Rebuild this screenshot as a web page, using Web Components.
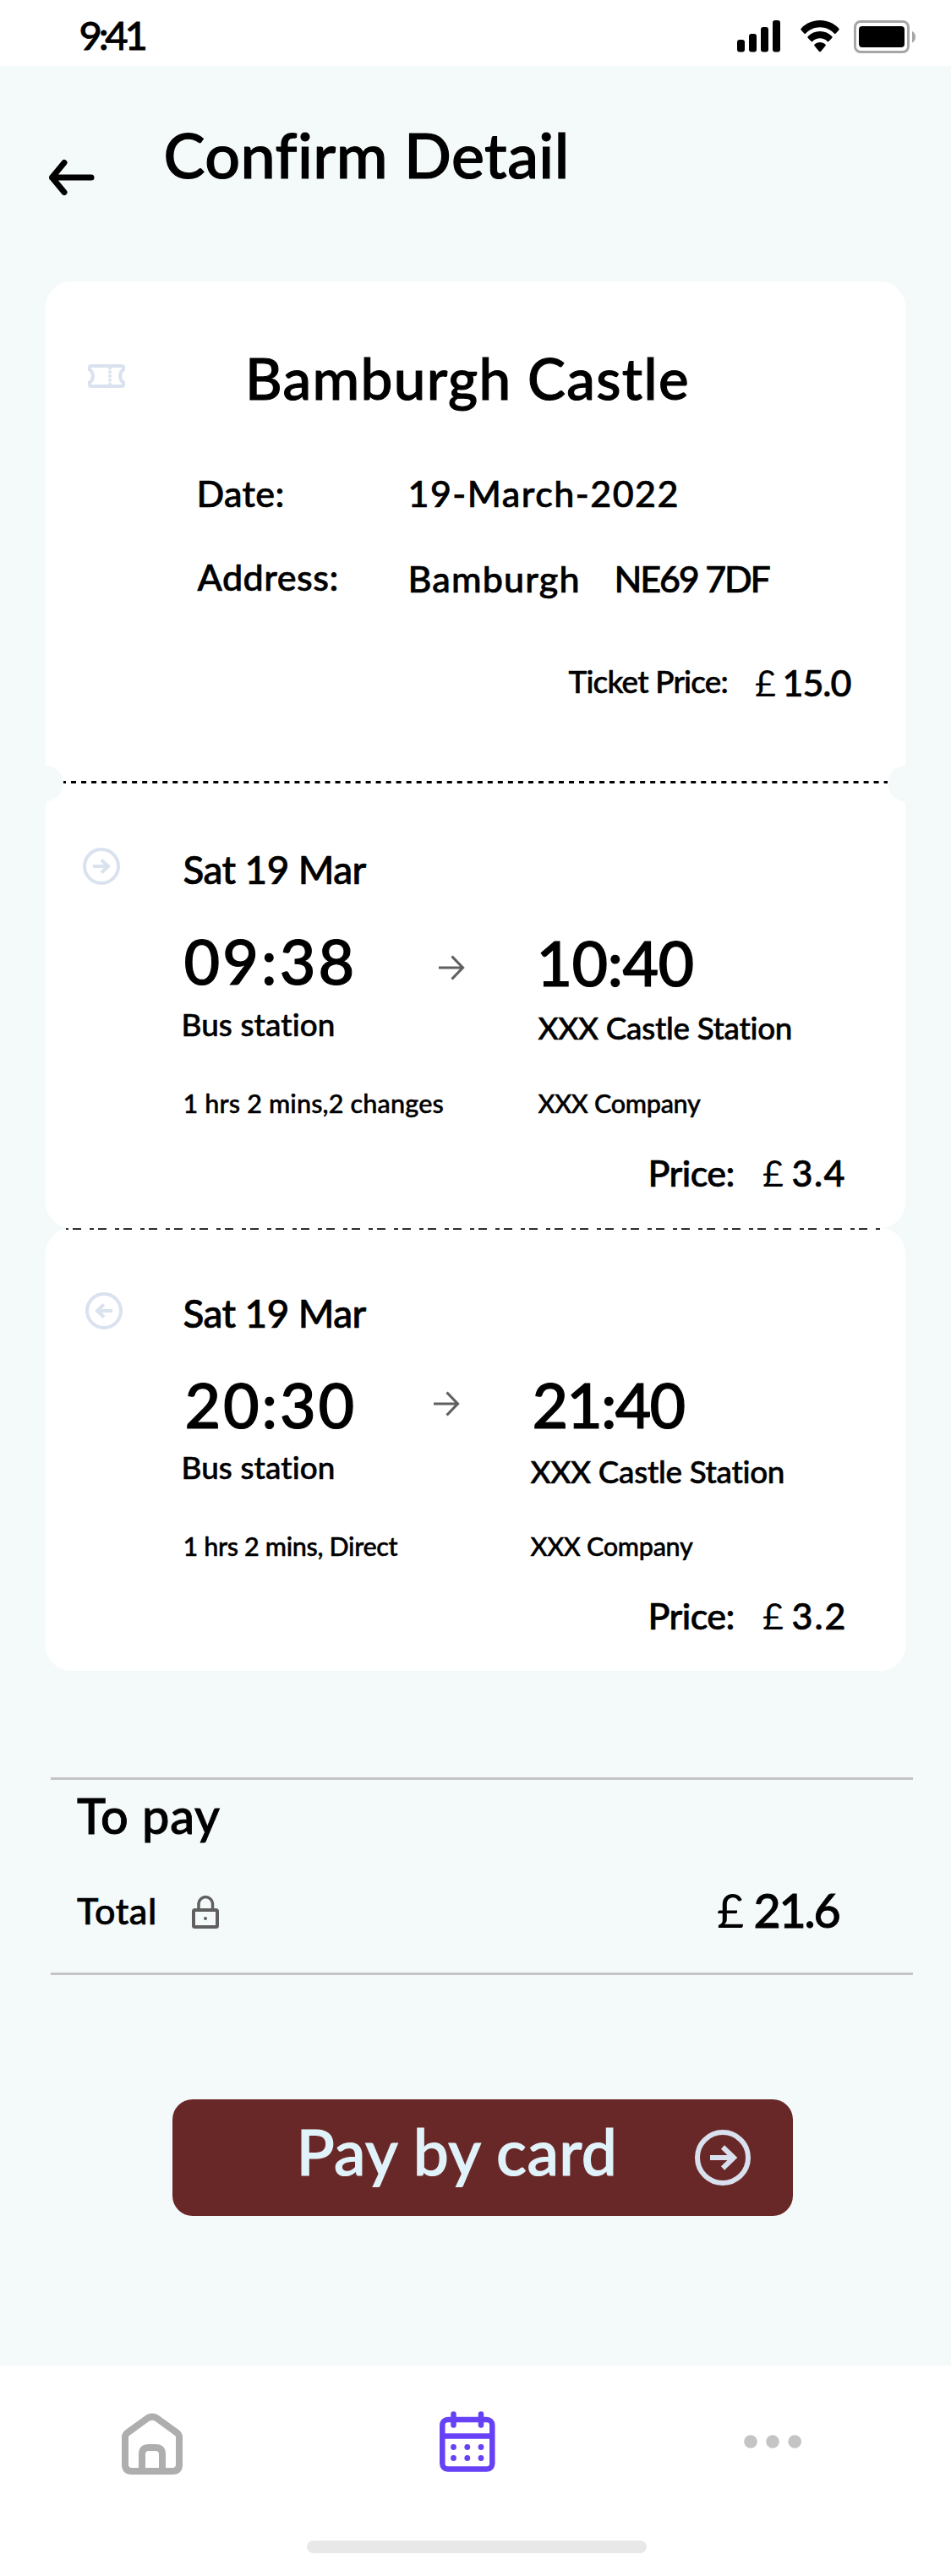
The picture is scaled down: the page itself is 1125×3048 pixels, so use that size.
<!DOCTYPE html>
<html lang="en">
<head>
<meta charset="utf-8">
<title>Confirm Detail</title>
<style>
body{margin:0;background:#f4fafa;font-family:Lato,"Liberation Sans",sans-serif;font-weight:500;color:#000}
</style>
</head>
<body>
<ticket-app></ticket-app>
<script>
const pen = document.createElement('canvas').getContext('2d');

function define(name, html, after) {
  const tpl = document.createElement('template');
  tpl.innerHTML = html;
  customElements.define(name, class extends HTMLElement {
    connectedCallback() {
      if (this.shadowRoot) return;
      this.attachShadow({mode: 'open'}).append(tpl.content.cloneNode(true));
      if (after) after(this, this.shadowRoot);
    }
  });
}

/* A line of text whose box is exactly its capital height (cap) by its ink width (w). */
define('fit-text', `<style>
:host{display:block;flex:none;white-space:pre}
span{display:block;width:0;padding-top:1px}
</style><span></span>`, (host, root) => {
  const text = host.getAttribute('text');
  const cap = +host.getAttribute('cap'), w = +host.getAttribute('w');
  const thin = host.hasAttribute('thin');
  const weight = thin ? 400 : 500;
  const size = cap / 0.72;
  pen.font = `${weight} ${size}px Lato, "Liberation Sans", sans-serif`;
  const m = pen.measureText(text);
  const ink = m.actualBoundingBoxRight + m.actualBoundingBoxLeft;
  const space = text.length > 1 ? (w - ink) / (text.length - 1) : 0;
  host.style.width = w + 'px';
  host.style.height = cap + 'px';
  const s = root.querySelector('span');
  s.textContent = text;
  s.style.cssText = `font-size:${size}px;font-weight:${weight};line-height:${2 * (cap - 0.387 * size)}px;letter-spacing:${space}px;font-variant-ligatures:none;margin-left:${m.actualBoundingBoxLeft - (thin ? 0 : 0.5)}px;-webkit-text-stroke:${thin ? 0 : 0.016 * size}px currentColor`;
});

const icons = {
  back: [54, 42, '<path d="M3.500 21H50M18 3.500L3.500 21L18 38.500" stroke-width="7" stroke-linecap="round" stroke-linejoin="round"/>'],
  ticket: [44, 28, '<path d="M4 2H40Q42 2 42 4V6.500C37 9 37 19 42 21.500V24Q42 26 40 26H4Q2 26 2 24V21.500C7 19 7 9 2 6.500V4Q2 2 4 2Z" stroke-width="4"/><g fill="currentColor" stroke="none"><circle cx="26" cy="4.500" r="2"/><circle cx="26" cy="9.300" r="2"/><circle cx="26" cy="14" r="2"/><circle cx="26" cy="18.700" r="2"/><circle cx="26" cy="23.500" r="2"/></g>'],
  out: [44, 44, '<circle cx="22" cy="22" r="20" stroke-width="4"/><path d="M12 22H30M22 14.500L30 22L22 29.500" stroke-width="4"/>'],
  home: [72, 72, '<path d="M4 27.500Q4 25 6.500 22.700L30.500 5.300Q36 2 41.500 5.300L65.500 22.700Q68 25 68 27.500V60Q68 68 60 68H12Q4 68 4 60Z" stroke-width="8"/><path d="M24 66V48Q24 40 32 40H40Q48 40 48 48V66" stroke-width="8"/>'],
  back2: [44, 44, '<circle cx="22" cy="22" r="20" stroke-width="4"/><path d="M32 22H14M22 14.500L14 22L22 29.500" stroke-width="4"/>'],
  arrow: [30, 30, '<path d="M0 15H28.500M15.500 1.500L28.500 15L15.500 28.500" stroke-width="3.200"/>'],
  lock: [32, 40, '<rect x="2" y="18" width="28" height="20" rx="1.500" stroke-width="4"/><path d="M8 18V10A8.300 8.300 0 0 1 24.500 10V18" stroke-width="3.500"/><circle cx="16" cy="28" r="2" fill="currentColor" stroke="none"/>'],
  pay: [66, 66, '<circle cx="33" cy="33" r="30" stroke-width="6"/><path d="M18 33H46M33 20.500L46 33L33 45.500" stroke-width="6"/>'],
  calendar: [66, 72, '<rect x="3.300" y="10" width="59" height="58.500" rx="6.500" stroke-width="6.500"/><path d="M3 29.500H63" stroke-width="6.500"/><path d="M16.500 3.500V16.500M49 3.500V16.500" stroke-width="6.500" stroke-linecap="round"/><g fill="currentColor" stroke="none"><circle cx="16.500" cy="42.500" r="3.400"/><circle cx="32.800" cy="42.500" r="3.400"/><circle cx="49" cy="42.500" r="3.400"/><circle cx="16.500" cy="55.500" r="3.400"/><circle cx="32.800" cy="55.500" r="3.400"/><circle cx="49" cy="55.500" r="3.400"/></g>'],
  more: [68, 16, '<g fill="currentColor" stroke="none"><circle cx="8" cy="8" r="7.800"/><circle cx="34" cy="8" r="7.800"/><circle cx="60.200" cy="8" r="7.800"/></g>'],
  signal: [54, 38, '<g fill="currentColor" stroke="none"><rect y="23" width="9" height="14.500" rx="3"/><rect x="14" y="16" width="9" height="21.500" rx="3"/><rect x="28" y="8" width="9" height="29.500" rx="3"/><rect x="42" width="9" height="37.500" rx="3"/></g>'],
  wifi: [46, 38, '<g fill="currentColor" stroke="none"><path d="M23 0C31.500 0 39.500 3.500 45.200 9.500Q46.300 10.700 45.200 11.800L41.500 15.800Q40.800 16.400 40 15.700C35.500 11 29.500 8.300 23 8.300S10.500 11 6 15.700Q5.200 16.400 4.500 15.800L0.800 11.800Q-0.300 10.700 0.800 9.500C6.500 3.500 14.500 0 23 0Z"/><path d="M23 13C28.500 13 33.500 15.200 37.200 18.900Q38.300 20 37.200 21.100L33.300 25Q32.600 25.600 31.800 24.900C29.400 22.600 26.300 21.300 23 21.300S16.600 22.600 14.200 24.900Q13.400 25.600 12.700 25L8.800 21.100Q7.700 20 8.800 18.900C12.500 15.200 17.500 13 23 13Z"/><path d="M23 26C25.500 26 27.700 26.900 29.400 28.400Q30.400 29.300 29.500 30.300L23.900 36.900Q23 37.800 22.100 36.900L16.500 30.300Q15.600 29.300 16.600 28.400C18.300 26.900 20.500 26 23 26Z"/></g>'],
  battery: [74, 39, '<rect x="1.500" y="1.500" width="63" height="36" rx="6.500" stroke="#a6a6a6" stroke-width="3"/><rect x="6" y="7" width="54" height="25" rx="4" fill="#000" stroke="none"/><path d="M69 13C74.300 15 74.300 24.500 69 26.500Z" fill="#a6a6a6" stroke="none"/>'],
};
define('ui-icon', `<style>:host{display:block;flex:none}svg{display:block;overflow:visible}</style>`, (host, root) => {
  const [w, h, body] = icons[host.getAttribute('name')];
  root.innerHTML += `<svg width="${w}" height="${h}" viewBox="0 0 ${w} ${h}" fill="none" stroke="currentColor">${body}</svg>`;
});

define('status-bar', `<style>
:host{display:flex;height:78px;background:#fff;align-items:flex-start;box-sizing:border-box;padding:24px 41px 0 96px}
.right{display:flex;margin-left:auto}
</style>
<fit-text text="9:41" cap="34" w="77"></fit-text>
<div class="right"><ui-icon name="signal"></ui-icon><ui-icon name="wifi" style="margin-left:21px"></ui-icon><ui-icon name="battery" style="margin-left:17px"></ui-icon></div>`);

define('page-header', `<style>
:host{display:flex;align-items:flex-start;height:255px;box-sizing:border-box;padding:79px 0 0 58px}
</style>
<ui-icon name="back" style="margin-top:32px"></ui-icon>
<fit-text text="Confirm Detail" cap="53" w="471" style="margin-left:85px"></fit-text>`);

/* price line shared by all cards */
define('price-line', `<style>:host{display:flex;align-items:flex-end}</style><slot></slot>`);

define('ticket-card', `<style>
:host{display:block;height:594px;background:#fff;border-radius:30px 30px 0 0}
.row{display:flex;align-items:flex-start}
</style>
<div class="row" style="padding:91px 0 0 50px"><ui-icon name="ticket" style="color:#d9e2ee;margin-top:7px"></ui-icon><fit-text text="Bamburgh Castle" cap="48.5" w="518" style="margin-left:147.500px"></fit-text></div>
<div class="row" style="padding:96px 0 0 182px"><fit-text text="Date:" cap="31" w="99"></fit-text><fit-text text="19-March-2022" cap="31" w="315" style="margin-left:151px"></fit-text></div>
<div class="row" style="padding:68px 0 0 180px"><fit-text text="Address:" cap="31" w="165"></fit-text><fit-text text="Bamburgh" cap="31" w="198" style="margin:2px 0 0 87px"></fit-text><fit-text text="NE69 7DF" cap="31" w="181" style="margin:2px 0 0 46px"></fit-text></div>
<price-line style="padding:92px 0 0 619px"><fit-text text="Ticket Price:" cap="26.5" w="188" style="margin-bottom:4px"></fit-text><fit-text text="£" cap="31" w="24" thin style="margin-left:33px"></fit-text><fit-text text="15.0" cap="31" w="78" style="margin-left:11px"></fit-text></price-line>`);

define('journey-card', `<style>
:host{display:block;background:#fff;border-radius:30px}
.row{display:flex;align-items:flex-start}
.col{display:flex;flex-direction:column}
.lead{width:164px;flex:none;color:#d9e2ee;box-sizing:border-box}
</style>
<div class="row" style="padding-top:76px"><div class="lead"></div>
<div class="col"><fit-text id="date" text="Sat 19 Mar" cap="33" w="216"></fit-text><slot></slot></div></div>
<slot name="price"></slot>`, (host, root) => {
  const lead = root.querySelector('.lead');
  lead.style.paddingLeft = host.getAttribute('icon-x') + 'px';
  lead.innerHTML = `<ui-icon name="${host.getAttribute('icon')}"></ui-icon>`;
  root.getElementById('date').style.marginTop = host.getAttribute('date-top') + 'px';
});

define('tear-line', `<style>
:host{display:block;height:0;position:relative;z-index:1}
svg{position:absolute;left:0;top:-21px;overflow:visible}
</style><svg width="1017" height="42"></svg>`, (host, root) => {
  root.querySelector('svg').innerHTML = host.hasAttribute('notched')
    ? '<circle cy="21" r="21" fill="#f4fafa"/><circle cx="1017" cy="21" r="21" fill="#f4fafa"/><path d="M21 19.500H996" stroke="#000" stroke-width="3" stroke-dasharray="6 6.020" stroke-dashoffset="3"/>'
    : '<path d="M24 22.200H987" stroke="#000" stroke-width="1.700" stroke-dasharray="10 10 5 5" stroke-dashoffset="22"/>';
});

define('pay-summary', `<style>
:host{display:block;margin:126px 45px 0 60px;height:234px;box-sizing:border-box;border-top:3px solid #c4c4c4;border-bottom:3px solid #c4c4c4;padding:21.500px 0 0 31.500px}
.row{display:flex;align-items:flex-start;margin-top:71px}
</style>
<fit-text text="To pay" cap="41.5" w="169"></fit-text>
<div class="row"><fit-text text="Total" cap="31" w="92" style="margin-top:6px"></fit-text><ui-icon name="lock" style="color:#606060;margin:2px 0 0 43.500px"></ui-icon><fit-text text="£" cap="40" w="29" thin style="margin-left:590px"></fit-text><fit-text text="21.6" cap="40" w="99" style="margin-left:16px"></fit-text></div>`);

define('pay-button', `<style>
:host{display:flex;align-items:flex-start;width:734px;height:138px;margin:147px 0 0 204px;border-radius:24px;background:#692828;color:#e1f3fa;box-sizing:border-box;padding:36px 0 0 153px}
</style>
<fit-text text="Pay by card" cap="54" w="373"></fit-text><ui-icon name="pay" style="color:#d9e1ee;margin-left:92px"></ui-icon>`);

define('tab-bar', `<style>
:host{display:flex;flex-direction:column;height:249px;margin-top:177px;background:#fff}
.tabs{display:flex;align-items:flex-start;padding:54px 0 0 144px;height:153px}
.grip{width:402px;height:15px;border-radius:7.500px;background:#e8e8e8;margin-left:363px}
</style>
<div class="tabs"><ui-icon name="home" style="color:#aeaeae;margin-top:3px"></ui-icon><ui-icon name="calendar" style="color:#6741f5;margin-left:303.500px"></ui-icon><ui-icon name="more" style="color:#c4c4c4;margin:28px 0 0 294.500px"></ui-icon></div>
<div class="grip"></div>`);

define('ticket-app', `<style>
:host{display:block;width:1125px;height:3048px;overflow:hidden}
.cards{margin:0 54px}
.row{display:flex;align-items:flex-start}
.col{display:flex;flex-direction:column;flex:none}
</style>
<status-bar></status-bar>
<page-header></page-header>
<div class="cards">
<ticket-card></ticket-card>
<tear-line notched></tear-line>
<journey-card icon="out" icon-x="44" date-top="10" style="height:525.500px">
  <div class="row" style="margin-top:65px">
    <div class="col" style="width:299px"><fit-text text="09:38" cap="53" w="197" style="margin-left:2px"></fit-text><fit-text text="Bus station" cap="26.5" w="178" style="margin-top:34.500px"></fit-text><fit-text text="1 hrs 2 mins,2 changes" cap="22" w="306" style="margin:70px 0 0 1px"></fit-text></div>
    <ui-icon name="arrow" style="color:#606060;margin:19px 0 0 2px"></ui-icon>
    <div class="col" style="margin:2px 0 0 88px"><fit-text text="10:40" cap="53" w="180" style="margin-left:3px"></fit-text><fit-text text="XXX Castle Station" cap="26.5" w="300" style="margin-top:37px"></fit-text><fit-text text="XXX Company" cap="22" w="192.5" style="margin-top:65px"></fit-text></div>
  </div>
  <price-line slot="price" style="padding:56px 0 0 716px"><fit-text text="Price:" cap="31" w="98"></fit-text><fit-text text="£" cap="31" w="24" thin style="margin-left:35px"></fit-text><fit-text text="3.4" cap="31" w="61" style="margin-left:11px"></fit-text></price-line>
</journey-card>
<tear-line></tear-line>
<journey-card icon="back2" icon-x="47" date-top="9" style="height:524.500px">
  <div class="row" style="margin-top:65px">
    <div class="col" style="width:295px"><fit-text text="20:30" cap="53" w="196" style="margin-left:4px"></fit-text><fit-text text="Bus station" cap="26.5" w="178" style="margin-top:34.500px"></fit-text><fit-text text="1 hrs 2 mins, Direct" cap="22" w="252" style="margin:69.500px 0 0 1px"></fit-text></div>
    <ui-icon name="arrow" style="color:#606060;margin:10.500px 0 0 0"></ui-icon>
    <div class="col" style="margin:0 0 0 85px"><fit-text text="21:40" cap="53" w="177" style="margin-left:5px"></fit-text><fit-text text="XXX Castle Station" cap="26.5" w="300" style="margin-top:39px"></fit-text><fit-text text="XXX Company" cap="22" w="192.5" style="margin-top:65px"></fit-text></div>
  </div>
  <price-line slot="price" style="padding:56px 0 0 716px"><fit-text text="Price:" cap="31" w="98"></fit-text><fit-text text="£" cap="31" w="24" thin style="margin-left:35px"></fit-text><fit-text text="3.2" cap="31" w="61" style="margin-left:11px"></fit-text></price-line>
</journey-card>
</div>
<pay-summary></pay-summary>
<pay-button></pay-button>
<tab-bar></tab-bar>`);
</script>
</body>
</html>
